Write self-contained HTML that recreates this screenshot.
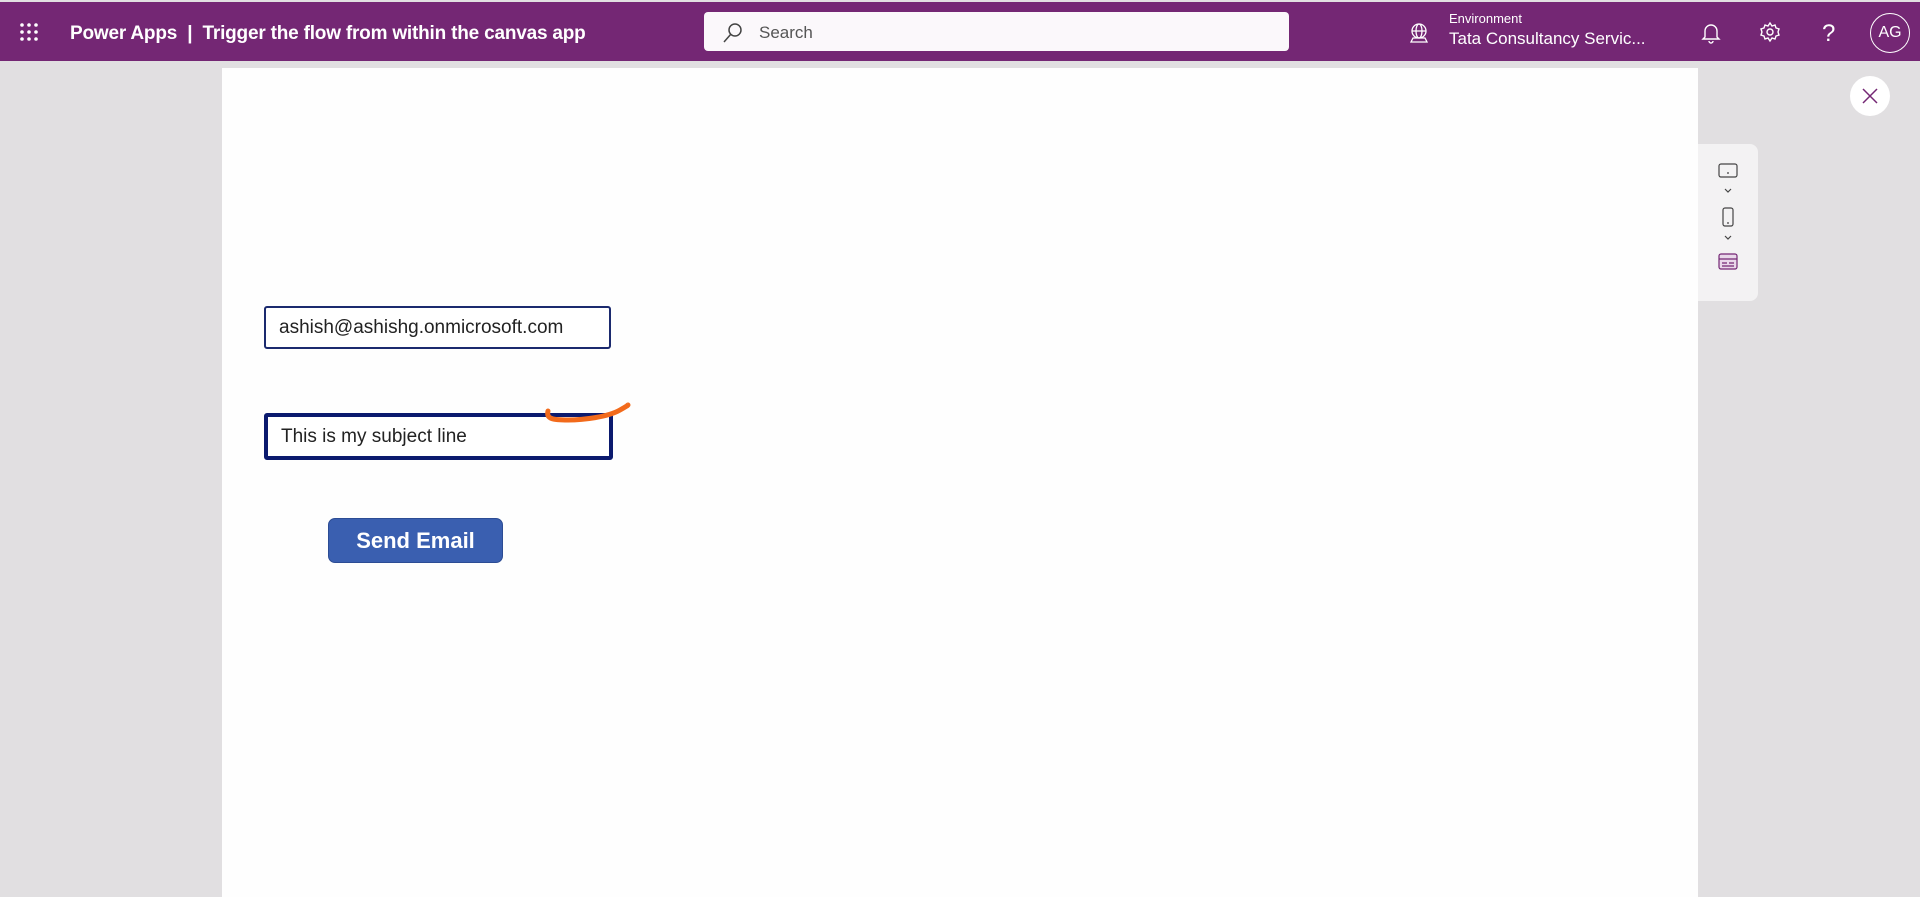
<!DOCTYPE html>
<html><head><meta charset="utf-8"><style>
*{margin:0;padding:0;box-sizing:border-box}
body{width:1920px;height:897px;background:#e1dfe1;font-family:"Liberation Sans",sans-serif;position:relative;overflow:hidden}
.hdr{position:absolute;left:0;top:2px;width:1920px;height:59px;background:#742774;color:#fff}
.abs{position:absolute}
.canvas{position:absolute;left:222px;top:68px;width:1476px;height:829px;background:#fefefe}
.inp{position:absolute;background:#fff;border-radius:3px;font-size:19px;color:#222;padding-left:13px;display:flex;align-items:center}
</style></head><body>
<div class="hdr">
 <svg class="abs" style="left:19px;top:20px" width="20" height="20" fill="#fff"><circle cx="3" cy="3" r="1.8"/><circle cx="10" cy="3" r="1.8"/><circle cx="17" cy="3" r="1.8"/><circle cx="3" cy="10" r="1.8"/><circle cx="10" cy="10" r="1.8"/><circle cx="17" cy="10" r="1.8"/><circle cx="3" cy="17" r="1.8"/><circle cx="10" cy="17" r="1.8"/><circle cx="17" cy="17" r="1.8"/></svg>
 <div class="abs" style="left:70px;top:21px;font-size:19px;font-weight:bold;white-space:nowrap;letter-spacing:-0.2px">Power Apps &nbsp;|&nbsp; Trigger the flow from within the canvas app</div>
 <div class="abs" style="left:704px;top:10px;width:585px;height:39px;background:#fbf8fb;border-radius:4px">
  <svg class="abs" style="left:18px;top:10px" width="22" height="22" fill="none" stroke="#444" stroke-width="1.5"><circle cx="13" cy="8" r="6"/><path d="M9 12L2 20"/></svg>
  <div class="abs" style="left:55px;top:11px;font-size:17px;color:#555">Search</div>
 </div>
 <svg class="abs" style="left:1408px;top:20px" width="22" height="22" fill="none" stroke="#fff" stroke-width="1.3"><circle cx="11" cy="9" r="7"/><ellipse cx="11" cy="9" rx="3" ry="7"/><path d="M4 9h14M3 20h16l-2-4H5z"/></svg>
 <div class="abs" style="left:1449px;top:9px;font-size:13px">Environment</div>
 <div class="abs" style="left:1449px;top:27px;font-size:17px;white-space:nowrap">Tata Consultancy Servic...</div>
 <svg class="abs" style="left:1701px;top:20px" width="20" height="22" fill="none" stroke="#fff" stroke-width="1.4"><path d="M4 15V9a6 6 0 0112 0v6l2 2H2z M8 19a2 2 0 004 0"/></svg>
 <svg class="abs" style="left:1759px;top:19px" width="22" height="22" fill="none" stroke="#fff" stroke-width="1.4"><circle cx="11" cy="11" r="3"/><path d="M11 2l2 3 3-1 1 3 3 1-1 3 1 3-3 1-1 3-3-1-2 3-2-3-3 1-1-3-3-1 1-3-1-3 3-1 1-3 3 1z"/></svg>
 <div class="abs" style="left:1822px;top:18px;font-size:24px">?</div>
 <div class="abs" style="left:1870px;top:11px;width:40px;height:40px;border:1.5px solid #fff;border-radius:50%;font-size:16px;display:flex;align-items:center;justify-content:center">AG</div>
</div>
<div class="canvas"></div>
<div class="abs" style="left:1850px;top:76px;width:40px;height:40px;background:#fff;border-radius:50%">
 <svg class="abs" style="left:12px;top:12px" width="16" height="16" stroke="#742774" stroke-width="1.5"><path d="M1 1L15 15M15 1L1 15"/></svg>
</div>
<div class="abs" style="left:1698px;top:144px;width:60px;height:157px;background:#f3f2f3;border-radius:0 8px 8px 0">
 <svg class="abs" style="left:20px;top:18px" width="22" height="120" fill="none" stroke="#444" stroke-width="1.2"><rect x="1" y="2" width="18" height="13" rx="2"/><path d="M9 11h2M7 27l3 3 3-3"/><rect x="5" y="46" width="10" height="18" rx="2"/><path d="M9 61h2M7 74l3 3 3-3"/><rect x="1" y="92" width="18" height="15" rx="2" stroke="#742774" fill="#e9d8ea"/><path d="M1 97h18M4 101h5M11 101h5M4 104h12" stroke="#742774"/></svg>
</div>
<div class="inp" style="left:264px;top:306px;width:347px;height:43px;border:2px solid #1b2a6e">ashish@ashishg.onmicrosoft.com</div>
<div class="inp" style="left:264px;top:413px;width:349px;height:47px;border:4px solid #0b1a6e">This is my subject line</div>
<svg class="abs" style="left:540px;top:395px" width="110" height="40" fill="none"><path d="M8 16c-2 8 5 9 20 9s40-3 52-10 5 -3 8 -5" stroke="#f26a1b" stroke-width="5" stroke-linecap="round"/></svg>
<div class="abs" style="left:328px;top:518px;width:175px;height:45px;background:#3a5fb0;border:1px solid #2c4c94;border-radius:7px;color:#fff;font-size:22px;font-weight:bold;display:flex;align-items:center;justify-content:center">Send Email</div>
</body></html>
